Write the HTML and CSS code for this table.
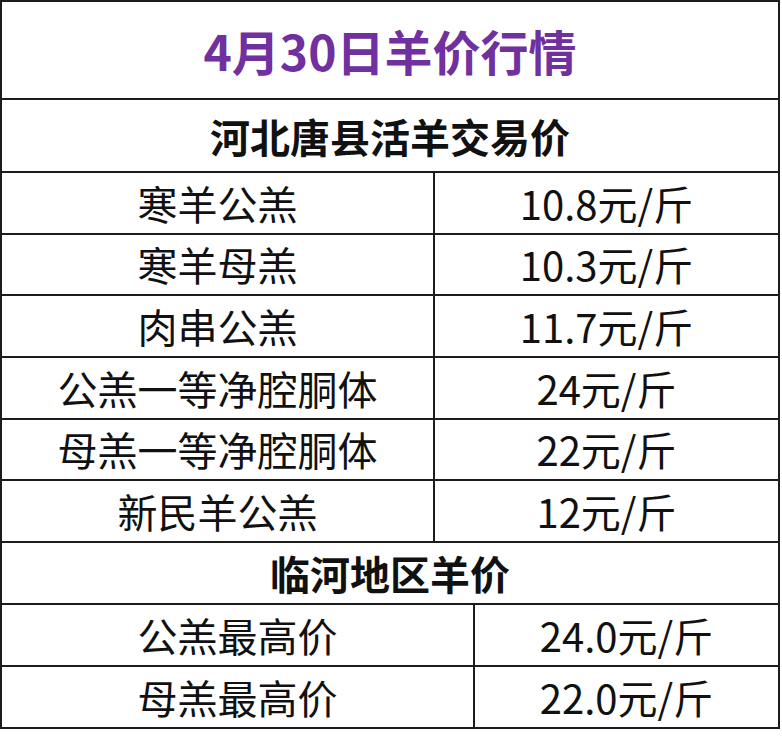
FILE: index.html
```html
<!DOCTYPE html>
<html lang="zh">
<head>
<meta charset="utf-8">
<link rel="stylesheet" href="styles.css">
</head>
<body>
<div class="sheet">
  <div class="row title">4月30日羊价行情</div>
  <div class="row head">河北唐县活羊交易价</div>
  <div class="row data a"><div class="c1">寒羊公羔</div><div class="c2">10.8元/斤</div></div>
  <div class="row data a"><div class="c1">寒羊母羔</div><div class="c2">10.3元/斤</div></div>
  <div class="row data a"><div class="c1">肉串公羔</div><div class="c2">11.7元/斤</div></div>
  <div class="row data a"><div class="c1">公羔一等净腔胴体</div><div class="c2">24元/斤</div></div>
  <div class="row data a"><div class="c1">母羔一等净腔胴体</div><div class="c2">22元/斤</div></div>
  <div class="row data a"><div class="c1">新民羊公羔</div><div class="c2">12元/斤</div></div>
  <div class="row head h2">临河地区羊价</div>
  <div class="row data b"><div class="c1">公羔最高价</div><div class="c2">24.0元/斤</div></div>
  <div class="row data b"><div class="c1">母羔最高价</div><div class="c2">22.0元/斤</div></div>
</div>
</body>
</html>
```

FILE: styles.css
```css
html, body {
  margin: 0;
  padding: 0;
  background: #fff;
}
body {
  font-family: "Noto Sans CJK SC", "Noto Sans", sans-serif;
  color: #111;
}
.sheet {
  width: 780px;
  box-sizing: border-box;
  border: 2px solid #1c1c1c;
  border-bottom: none;
}
.row {
  box-sizing: border-box;
  border-bottom: 2px solid #1c1c1c;
  display: flex;
  align-items: stretch;
}
.title {
  height: 98px;
  justify-content: center;
  align-items: center;
  font-size: 48px;
  font-weight: 700;
  color: #7030a0;
}
.head {
  height: 73px;
  justify-content: center;
  align-items: center;
  font-size: 40px;
  font-weight: 700;
  color: #111;
}
.h2 {
  height: 62px;
}
.data {
  height: 61.67px;
  font-size: 40px;
}
.data.b {
  height: 62px;
}
.c1, .c2 {
  display: flex;
  align-items: center;
  justify-content: center;
}
.c1 {
  box-sizing: border-box;
  border-right: 2px solid #1c1c1c;
}
.a .c1 { width: 433px; }
.b .c1 { width: 473px; }
.c2 { flex: 1; }
```
